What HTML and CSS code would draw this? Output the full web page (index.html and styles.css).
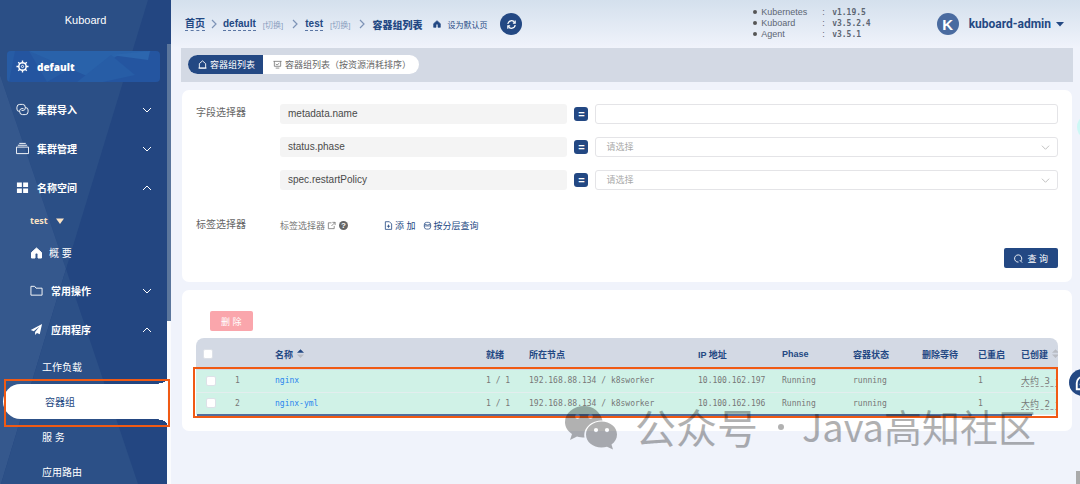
FILE: index.html
```html
<!DOCTYPE html>
<html lang="zh-CN">
<head>
<meta charset="utf-8">
<title>Kuboard</title>
<link rel="stylesheet" href="styles.css">
</head>
<body>
<svg class="defs" width="0" height="0" aria-hidden="true">
  <symbol id="down" viewBox="0 0 10 10"><path d="M1 3l4 4 4-4" fill="none" stroke="currentColor"/></symbol>
  <symbol id="up" viewBox="0 0 10 10"><path d="M1 7l4-4 4 4" fill="none" stroke="currentColor"/></symbol>
  <symbol id="sep" viewBox="0 0 8 10"><path d="M2 1l4 4-4 4" fill="none" stroke="currentColor" stroke-width="1.2"/></symbol>
  <symbol id="home" viewBox="0 0 12 12"><path d="M6 1L1 5.500V11h3.500V7.500a1.500 1.500 0 0 1 3 0V11H11V5.500z" fill="currentColor" stroke="currentColor" stroke-linejoin="round"/></symbol>
</svg>
<div class="app">
  <aside class="sidebar">
    <svg class="facets" viewBox="0 0 171 484" preserveAspectRatio="none" aria-hidden="true">
      <path d="M0 0H148L66 269 0 75z" fill="#2b4f86"/>
      <path d="M0 75L66 269 1 484H0z" fill="#35588d"/>
      <path d="M66 269L138 484H1z" fill="#2c5087"/>
    </svg>
    <div class="rail"></div>
    <div class="brand">Kuboard</div>
    <a class="cluster" href="#">
      <svg class="facets" viewBox="0 0 153 31" preserveAspectRatio="none" aria-hidden="true">
        <path d="M0 0L8 0 2 31H0z M22 0L40 31 80 8z" fill="#275ca5"/><path d="M22 0H145L110 5 80 25z" fill="#2962aa"/><path d="M70 31L104 4 128 24 96 31z" fill="#275da6"/><path d="M104 4L141 9 143 0z" fill="#2c66ae"/>
      </svg>
      <svg class="ico" viewBox="0 0 14 14"><g fill="none" stroke="currentColor"><circle cx="7" cy="7" r="4" stroke-width="1.600"/><circle cx="7" cy="7" r="1.200"/><path stroke-width="1.500" d="M7 .5v3M7 10.500v3M.5 7h3M10.500 7h3M2.400 2.400l2 2M9.600 9.600l2 2M2.400 11.600l2-2M9.600 4.400l2-2"/></g></svg>
      <span>default</span>
    </a>
    <nav class="menu">
      <a class="item" href="#"><svg class="ico" viewBox="0 0 14 14"><g fill="none" stroke="currentColor"><path d="M4 9H3.500A2.500 2.500 0 0 1 1 6.500V4.500A3 3 0 0 1 4 1.500H7A3 3 0 0 1 10 4.500V5.500A2.500 2.500 0 0 1 7.500 8H6"/><path d="M10 5H10.500A2.500 2.500 0 0 1 13 7.500V9.500A3 3 0 0 1 10 12.500H7A3 3 0 0 1 4 9.500V8A2.500 2.500 0 0 1 6.500 6H8"/></g></svg><span>集群导入</span><svg class="arrow"><use href="#down"/></svg></a>
      <a class="item" href="#"><svg class="ico" viewBox="0 0 14 14"><path d="M.5 5.500h13v7H.5zM2 3.500h10M3.500 1.500h7" fill="none" stroke="currentColor"/></svg><span>集群管理</span><svg class="arrow"><use href="#down"/></svg></a>
      <a class="item" href="#"><svg class="ico" viewBox="0 0 14 14"><path d="M1 1.500h5.300v5H1zM7.700 1.500H13v5H7.700zM1 8h5.300v5H1zM7.700 8H13v5H7.700z" fill="currentColor"/></svg><span>名称空间</span><svg class="arrow"><use href="#up"/></svg></a>
      <button class="space" type="button">test<svg viewBox="0 0 10 8"><path d="M1 1.500h8L5 7z" fill="currentColor"/></svg></button>
      <a class="item nested summary" href="#"><svg class="ico"><use href="#home"/></svg><span>概 要</span></a>
      <a class="item nested" href="#"><svg class="ico" viewBox="0 0 14 14"><path d="M1 2.500h4l1.500 2H13v7.500H1z" fill="none" stroke="currentColor"/></svg><span>常用操作</span><svg class="arrow"><use href="#down"/></svg></a>
      <a class="item nested" href="#"><svg class="ico" viewBox="0 0 14 14"><path d="M13 1L.8 7.500 4 9l6-5-4.500 5.800V13l2-2.300 3 1.500z" fill="currentColor"/></svg><span>应用程序</span><svg class="arrow"><use href="#up"/></svg></a>
      <a class="leaf" href="#">工作负载</a>
      <a class="leaf current" href="#" aria-current="page">容器组</a>
      <a class="leaf" href="#">服 务</a>
      <a class="leaf" href="#">应用路由</a>
    </nav>
  </aside>

  <main class="main">
    <header class="topbar">
      <nav class="crumbs">
        <a class="crumb" href="#">首页</a><svg class="sep"><use href="#sep"/></svg>
        <a class="crumb" href="#">default</a><a class="switch" href="#">[切换]</a><svg class="sep"><use href="#sep"/></svg>
        <a class="crumb" href="#">test</a><a class="switch" href="#">[切换]</a><svg class="sep"><use href="#sep"/></svg>
        <strong>容器组列表</strong>
      </nav>
      <button class="sethome" type="button"><svg><use href="#home"/></svg>设为默认页</button>
      <button class="refresh" type="button" aria-label="刷新"><svg viewBox="0 0 12 12"><g fill="none" stroke="currentColor" stroke-width="1.300"><path d="M2 5.500A4 4 0 0 1 9.500 4M10 6.500A4 4 0 0 1 2.500 8"/><path d="M10 1.500V4.500H7.500M2 10.500V7.500H4.500"/></g></svg></button>
      <ul class="versions">
        <li><span>Kubernetes</span><i>:</i><b>v1.19.5</b></li>
        <li><span>Kuboard</span><i>:</i><b>v3.5.2.4</b></li>
        <li><span>Agent</span><i>:</i><b>v3.5.1</b></li>
      </ul>
      <button class="user" type="button"><span class="avatar">K</span>kuboard-admin<svg viewBox="0 0 8 6"><path d="M0 1h8L4 5.500z" fill="currentColor"/></svg></button>
    </header>

    <div class="tabbar">
      <div class="tabs">
        <button class="tab active" type="button"><svg viewBox="0 0 10 10"><path d="M1.500 9V4L5 1l3.500 3v5zM.5 9h9" fill="none" stroke="currentColor"/></svg>容器组列表</button>
        <button class="tab" type="button"><svg viewBox="0 0 10 10"><path d="M.5 1.500h9M1.500 1.500v5.500h7V1.500M3 4.500l1.500 1L7 3.500M3 9h4" fill="none" stroke="currentColor" stroke-width=".8"/></svg>容器组列表（按资源消耗排序）</button>
      </div>
    </div>

    <form class="card filters">
      <div class="group">
        <div class="caption">字段选择器</div>
        <div class="fields">
          <div class="field"><label for="f1">metadata.name</label><span class="eq">=</span><input id="f1" type="text"></div>
          <div class="field"><label for="f2">status.phase</label><span class="eq">=</span><div class="pick"><select id="f2"><option>请选择</option></select><svg><use href="#down"/></svg></div></div>
          <div class="field"><label for="f3">spec.restartPolicy</label><span class="eq">=</span><div class="pick"><select id="f3"><option>请选择</option></select><svg><use href="#down"/></svg></div></div>
        </div>
      </div>
      <div class="group labels">
        <div class="caption">标签选择器</div>
        <div class="tools">
          <a class="doc" href="#">标签选择器<svg viewBox="0 0 10 10"><path d="M5 2H1.500v6.500H8V5.500M6 1.500h3v3M9 1.500L5 5.500" fill="none" stroke="currentColor" stroke-width=".9"/></svg></a>
          <span class="help">?</span>
          <button class="add" type="button"><svg viewBox="0 0 10 10"><path d="M1.500.8h4.500l2.500 2.500v6h-7zM5 4v3.500M3.200 5.800h3.600" fill="none" stroke="currentColor" stroke-width=".9"/></svg>添 加</button>
          <button type="button"><svg viewBox="0 0 10 10"><g fill="none" stroke="currentColor" stroke-width=".8"><rect x="1.500" y="1.500" width="7" height="7.500" rx="2.500"/><path d="M1.500 3.500q3.500 2 7 0M1 5.500h8"/></g></svg>按分层查询</button>
        </div>
      </div>
      <div class="actions"><button class="query" type="button"><svg viewBox="0 0 10 10"><path d="M7.500 7.800A4 4 0 1 0 5 9M6.500 7l2.500 2.500" fill="none" stroke="currentColor"/></svg>查 询</button></div>
    </form>

    <section class="card results">
      <button class="delete" type="button" disabled>删 除</button>
      <div class="tablebox">
        <div class="scroll">
          <table>
            <colgroup><col class="c-check"><col class="c-no"><col><col class="c-ready"><col class="c-node"><col class="c-ip"><col class="c-phase"><col class="c-state"><col class="c-wait"><col class="c-restart"><col class="c-age"></colgroup>
            <thead><tr>
              <th><input type="checkbox" aria-label="全选"></th><th></th>
              <th>名称<svg class="sort" viewBox="0 0 8 10"><path d="M0 4L4 0l4 4z" fill="#234883"/><path d="M0 6h8L4 10z" fill="#b9bcc3"/></svg></th>
              <th>就绪</th><th>所在节点</th><th>IP 地址</th><th>Phase</th><th>容器状态</th><th>删除等待</th><th>已重启</th>
              <th>已创建<svg class="sort" viewBox="0 0 8 10"><path d="M0 4L4 0l4 4zM0 6h8L4 10z" fill="#b9bcc3"/></svg></th>
            </tr></thead>
            <tbody>
              <tr><td><input type="checkbox" aria-label="选择 nginx"></td><td>1</td><td><a href="#">nginx</a></td><td>1 / 1</td><td>192.168.88.134 / k8sworker</td><td>10.100.162.197</td><td>Running</td><td>running</td><td></td><td>1</td><td><span class="age">大约 3 个月</span></td></tr>
              <tr><td><input type="checkbox" aria-label="选择 nginx-yml"></td><td>2</td><td><a href="#">nginx-yml</a></td><td>1 / 1</td><td>192.168.88.134 / k8sworker</td><td>10.100.162.196</td><td>Running</td><td>running</td><td></td><td>1</td><td><span class="age">大约 2 个月</span></td></tr>
            </tbody>
          </table>
          <div class="hbar"></div>
        </div>
        <div class="mark"></div>
      </div>
    </section>
  </main>

  <div class="bubble"></div>
  <button class="chat" type="button" aria-label="客服"><svg viewBox="0 0 16 16"><g fill="none" stroke="currentColor" stroke-width="1.500"><path d="M3 13V8a5 5 0 1 1 5 5z"/><path d="M6 8.500a2 2 0 0 0 4 0"/></g></svg></button>
  <div class="grip"></div>
  <div class="watermark">
    <svg viewBox="0 0 54 44" aria-hidden="true"><path fill-rule="evenodd" d="M19 0C8.500 0 0 7 0 16c0 5 2.600 9 7 12L5 34l7-3.500c2.500.8 5 1 7.500 1C18 22 26 14.500 37.500 14.500 35.500 6 28 0 19 0zM12.500 8a2.400 2.400 0 1 0 0 4.800 2.400 2.400 0 0 0 0-4.800zM25.500 8a2.400 2.400 0 1 0 0 4.800 2.400 2.400 0 0 0 0-4.800z"/><path fill-rule="evenodd" d="M36.500 15.500C28 15.500 21 21 21 28.500S28 41.500 36.500 41.500c2 0 3.800-.3 5.500-.8L48 43.500l-1.500-5C50 36 52 32.500 52 28.500c0-7.500-7-13-15.500-13zM31 22a2.100 2.100 0 1 0 0 4.200 2.100 2.100 0 0 0 0-4.200zM42 22a2.100 2.100 0 1 0 0 4.200 2.100 2.100 0 0 0 0-4.200z"/></svg>
    <span class="kind">公众号</span><span class="dot"></span><span>Java高知社区</span>
  </div>
</div>
</body>
</html>
```
FILE: styles.css
```css
:root {
  --navy: #234883;
  --sans: "Liberation Sans", "Noto Sans CJK SC", sans-serif;
  --mono: "DejaVu Sans Mono", "Noto Sans CJK SC", monospace;
}
* { box-sizing: border-box; }
body { margin: 0; background: #f0f3fb; font-family: var(--sans); font-size: 9px; color: #666; overflow: hidden; }
button, input, select { font: inherit; color: inherit; margin: 0; padding: 0; border: 0; background: none; }
a { color: inherit; text-decoration: none; }
.defs { position: absolute; }
.app { position: relative; display: flex; height: 100vh; overflow: hidden; }

.sidebar { position: relative; flex: none; width: 171px; overflow: hidden; background: #234681; color: #fff; }
.facets { position: absolute; inset: 0; width: 100%; height: 100%; }
.rail { position: absolute; z-index: 1; top: 44px; right: 0; bottom: 0; width: 4px; background: linear-gradient(#5b769c 277px, #fafbfd 277px); }
.brand { position: relative; height: 51px; line-height: 40px; text-align: center; font-size: 11px; }
.cluster { position: relative; display: flex; align-items: center; gap: 8px; height: 31px; margin: 0 11px 8px 7px; padding-left: 9px; border-radius: 4px; overflow: hidden; background: #2455a0; font: 800 10px "Open Sans", sans-serif; }
.cluster span, .cluster .ico { position: relative; }
.ico { flex: none; width: 13px; height: 13px; }
.menu { position: relative; }
.item { display: flex; align-items: center; gap: 8px; height: 39px; padding: 0 19px 0 16px; font-size: 10px; font-weight: 700; }
.item.nested { padding-left: 30px; }
.item.summary { height: 37px; gap: 6px; font-weight: 400; }
.summary .ico { height: 12px; }
.arrow { width: 10px; height: 10px; margin-left: auto; }
.space { display: flex; align-items: center; gap: 7px; height: 27px; padding-left: 30px; color: #fbe3c4; font: 700 9px "Open Sans", sans-serif; }
.space svg { width: 10px; height: 8px; }
.leaf { display: flex; align-items: center; height: 35px; padding-left: 42px; font-size: 10px; }
.current { position: relative; z-index: 2; margin: 0 4px 0 3px; background: #fff; color: var(--navy); border-radius: 18px 0 0 18px; }
.current::before { content: ""; position: absolute; right: 0; top: -5px; width: 14px; height: 45px; background: radial-gradient(ellipse 14px 5px at 0 0, transparent 98%, #fff) top / 100% 5px no-repeat, radial-gradient(ellipse 14px 5px at 0 100%, transparent 98%, #fff) bottom / 100% 5px no-repeat; }
.current::after { content: ""; position: absolute; inset: -5px -3px -8px 1px; border: 2px solid #f05a14; }

.main { flex: 1; min-width: 0; display: flex; flex-direction: column; gap: 8px; }
.topbar { display: flex; align-items: center; height: 48px; margin-bottom: -8px; padding: 0 16px 0 14px; background: linear-gradient(#d4e0ed, #f0f3fb); color: var(--navy); }
.crumbs { display: flex; align-items: center; font-size: 10px; font-weight: 700; }
.crumb { border-bottom: 1px dashed #5b76a4; line-height: 12px; }
.switch { margin-left: 7px; font-size: 8px; font-weight: 400; color: #8b9fbf; }
.sep { width: 8px; height: 10px; margin: 0 5px; color: #7d93b6; }
.switch + .sep { margin: 0 6px 0 8px; }
.sethome { display: flex; align-items: center; gap: 6px; margin-left: 11px; font-size: 8px; }
.sethome svg { width: 8px; height: 8px; }
.refresh { display: grid; place-items: center; width: 22px; height: 22px; margin-left: 13px; border-radius: 50%; background: var(--navy); color: #fff; }
.refresh svg { width: 11px; height: 11px; }
.versions { list-style: none; margin: 0 66px 2px auto; padding: 0; color: #5d6673; line-height: 11px; }
.versions li { display: grid; grid-template-columns: 4px 57px 3px auto; column-gap: 4px; align-items: center; }
.versions li::before { content: ""; width: 4px; height: 4px; border-radius: 50%; background: #555; }
.versions i { font-style: normal; }
.versions b { padding-left: 3px; font-family: var(--mono); font-size: 8px; }
.user { display: flex; align-items: center; font: 700 12px Roboto, sans-serif; }
.user svg { width: 8px; height: 6px; margin-left: 5px; }
.avatar { display: grid; place-items: center; width: 22px; height: 22px; margin-right: 10px; border-radius: 50%; background: #4a6ba0; color: #fff; font: 700 15px var(--sans); }

.tabbar { margin: 0 7px 0 10px; padding: 7px 7px 8px; background: #d3d9e4; }
.tabs { display: inline-flex; vertical-align: top; border-radius: 10px; overflow: hidden; background: #fff; }
.tab { display: flex; align-items: center; gap: 3px; height: 19px; padding: 0 8px 0 10px; font-size: 9px; }
.tab svg { width: 9px; height: 9px; }
.tab.active { background: var(--navy); color: #fff; }

.card { margin: 0 8px 0 11px; border-radius: 7px; background: #fff; }
.filters { padding: 14px; }
.group { display: grid; grid-template-columns: 84px 1fr; }
.caption { font-size: 10px; line-height: 18px; }
.fields { display: grid; gap: 13px; }
.field { display: grid; grid-template-columns: 287fr 14px 462fr; column-gap: 7px; align-items: center; color: #4a4a4a; }
.field label { height: 20px; padding-left: 8px; border-radius: 3px; background: #f4f4f4; font-size: 10px; line-height: 19px; }
.eq { height: 14px; border-radius: 3px; background: var(--navy); color: #fff; font-size: 11px; font-weight: 700; line-height: 14px; text-align: center; }
.field input, .pick select { width: 100%; height: 20px; border: 1px solid #e4e4e7; border-radius: 3px; background: #fff; }
.pick { display: grid; align-items: center; }
.pick > * { grid-area: 1 / 1; }
.pick select { appearance: none; padding-left: 10px; color: #aaa; }
.pick svg { width: 9px; height: 9px; margin-right: 8px; justify-self: end; color: #bbb; pointer-events: none; }
.labels { margin-top: 26px; }
.tools { display: flex; align-items: center; color: var(--navy); }
.tools svg { width: 9px; height: 9px; }
.doc, .tools button { display: flex; align-items: center; gap: 2px; }
.doc { color: #777; }
.help { width: 9px; height: 9px; margin-left: 3px; border-radius: 50%; background: #666; color: #fff; font-size: 8px; font-weight: 700; line-height: 9px; text-align: center; }
.tools .add { margin: 0 7px 0 36px; }
.actions { display: flex; justify-content: flex-end; margin-top: 14px; }
.query { display: flex; align-items: center; gap: 4px; height: 20px; padding: 0 10px; border-radius: 2px; background: var(--navy); color: #fff; }
.query svg { width: 9px; height: 9px; }

.results { padding: 21px 14px 14px; }
.delete { display: block; height: 20px; margin: 0 0 7px 14px; padding: 0 11px; border-radius: 2px; background: #faa6ac; color: #fff; }
.tablebox { position: relative; }
.scroll { overflow: hidden; border-radius: 8px 8px 0 0; }
.mark { position: absolute; inset: 29px 0 -1px -3px; border: 2px solid #f05a14; }
table { width: calc(100% + 30px); table-layout: fixed; border-collapse: collapse; }
th, td { padding: 0; text-align: left; white-space: nowrap; }
th { height: 32px; background: #d3d9e4; color: var(--navy); font-weight: 700; }
td { height: 22px; background: #d0f2e7; border-bottom: 1px solid #e3eeee; font-family: var(--mono); font-size: 8px; color: #777; }
td a { color: #2b85ee; }
th:first-child { padding-left: 7px; }
td:first-child { padding-left: 10px; }
input[type="checkbox"] { display: block; appearance: none; width: 10px; height: 10px; border: 1px solid #dde1e8; border-radius: 2px; background: #fff; }
.c-check { width: 39px; } .c-no { width: 40px; } .c-ready { width: 43px; } .c-node { width: 169px; } .c-ip { width: 84px; } .c-phase { width: 71px; } .c-state { width: 69px; } .c-wait { width: 56px; } .c-restart { width: 43px; } .c-age { width: 67px; }
.sort { width: 7px; height: 9px; margin-left: 4px; }
.age { border-bottom: 1px dashed #999; font-size: 9px; }
.hbar { height: 3px; margin: -1px 26px 0 1px; position: relative; background: #526d9c; }

.bubble { position: absolute; top: 118px; right: -8px; width: 11px; height: 18px; border-radius: 50%; background: #cdf8f5; }
.chat { position: absolute; top: 369px; right: -16px; display: grid; place-items: center; width: 27px; height: 27px; border-radius: 50%; background: var(--navy); color: #fff; }
.chat svg { width: 20px; height: 20px; }
.grip { position: absolute; right: 0; bottom: 0; width: 4px; height: 13px; background: #aaa; }
.watermark { position: absolute; right: 44px; bottom: 31px; display: flex; align-items: center; color: #000; opacity: .3; font: 400 38px/54px "Noto Sans CJK SC", sans-serif; pointer-events: none; }
.watermark svg { width: 54px; height: 44px; margin: 4px 16px 0 0; }
.kind { font-size: 41px; }
.dot { width: 6px; height: 6px; margin: 2px 18px 0 20px; border-radius: 50%; background: #000; }
```
